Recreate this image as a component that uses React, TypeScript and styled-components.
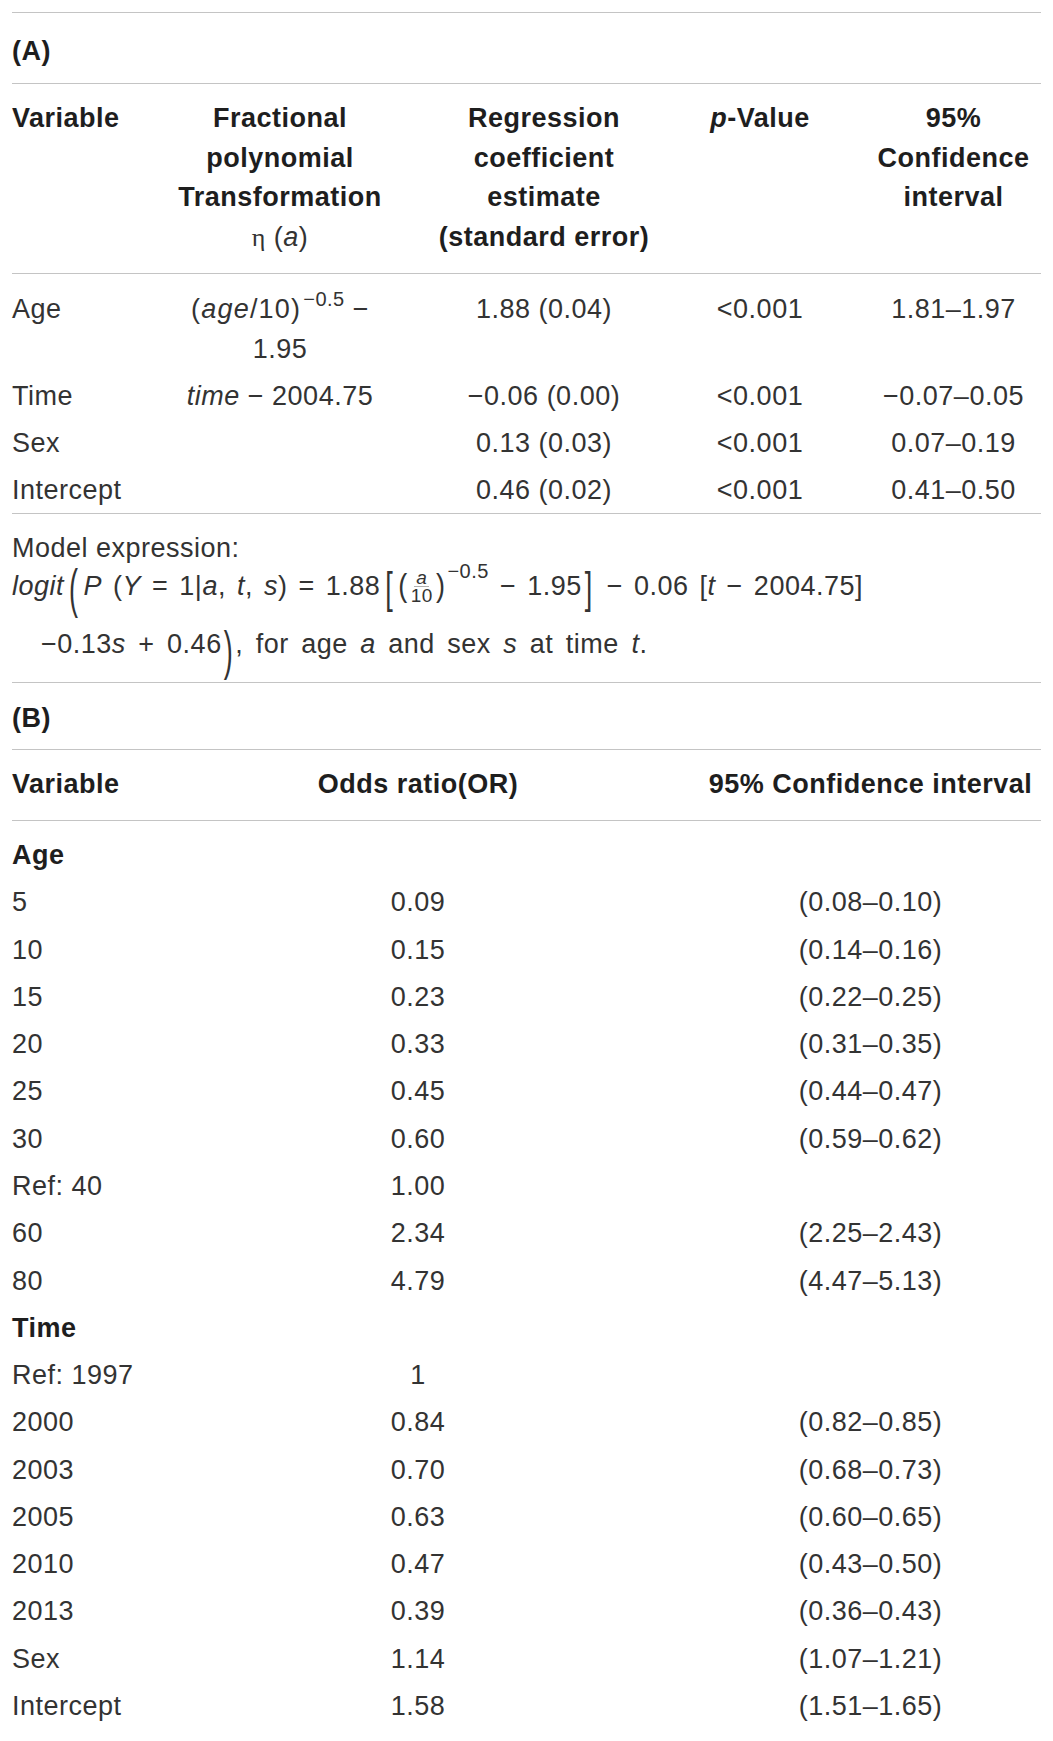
import React from 'react';
import styled, { createGlobalStyle } from 'styled-components';

const GlobalStyle = createGlobalStyle`
  html, body {
    margin: 0;
    padding: 0;
    background: #ffffff;
  }
  body {
    font-family: 'Liberation Sans', Arial, Helvetica, sans-serif;
    color: #333333;
  }
`;

const Sheet = styled.div`
  width: 1029px;
  padding: 12px 12px 10px;
  font-size: 27px;
  letter-spacing: 0.5px;
`;

const Block = styled.div<{ $pt: number; $pb: number }>`
  border-top: 1px solid #c4c4c4;
  padding: ${p => p.$pt}px 0 ${p => p.$pb}px;
`;

const Caption = styled.div`
  font-weight: 700;
  color: #1e1e1e;
  line-height: 40px;
`;

const Row = styled.div<{ $cols: string; $lh?: number; $pad?: number }>`
  display: grid;
  grid-template-columns: ${p => p.$cols};
  align-items: start;
  line-height: ${p => p.$lh ?? 40}px;
  padding: ${p => p.$pad ?? 0}px 0;
`;

const Cell = styled.div<{ $center?: boolean; $bold?: boolean }>`
  text-align: ${p => (p.$center ? 'center' : 'left')};
  font-weight: ${p => (p.$bold ? 700 : 400)};
  color: ${p => (p.$bold ? '#1e1e1e' : '#333333')};
  white-space: nowrap;
`;

const I = styled.i`
  font-style: italic;
`;

const Eta = styled.span`
  font-family: 'Liberation Serif', 'Times New Roman', serif;
  font-weight: 400;
  font-size: 26px;
`;

const Light = styled.span`
  font-weight: 400;
  color: #333333;
`;

const Expr = styled.span`
  letter-spacing: 1.2px;
`;

const InlineSup = styled.sup`
  font-size: 20px;
  line-height: 0;
  vertical-align: 12px;
  margin-left: 2px;
`;

const FormulaLine = styled.div<{ $h: number; $indent?: number; $ws?: number }>`
  display: flex;
  align-items: center;
  height: ${p => p.$h}px;
  padding-left: ${p => p.$indent ?? 0}px;
  white-space: pre;
  word-spacing: ${p => p.$ws ?? 0}px;
`;

const Big = styled.span<{ $scale: number; $gap?: number; $shift?: number }>`
  display: inline-block;
  transform: translateY(${p => p.$shift ?? 0}px) scaleY(${p => p.$scale});
  margin: 0 ${p => p.$gap ?? 3}px;
`;

const Frac = styled.span`
  display: inline-flex;
  flex-direction: column;
  align-items: center;
  font-size: 19px;
  line-height: 17px;
  margin: 0 3px;
`;

const Num = styled.span`
  font-style: italic;
  padding: 0 2px;
  border-bottom: 1px solid #b0b0b0;
`;

const Sup = styled.span`
  font-size: 20px;
  margin-bottom: 30px;
  margin-left: 2px;
`;

const colsA = '114px 308px 220px 212px 175px';
const colsB = '124px 564px 341px';

const rowsA: [string, React.ReactNode, string, string, string][] = [
  [
    'Age',
    <>
      <Expr>
        (<I>age</I>/10)
      </Expr>
      <InlineSup>−0.5</InlineSup> −<br />
      1.95
    </>,
    '1.88 (0.04)',
    '<0.001',
    '1.81–1.97',
  ],
  ['Time', <><I>time</I> − 2004.75</>, '−0.06 (0.00)', '<0.001', '−0.07–0.05'],
  ['Sex', '', '0.13 (0.03)', '<0.001', '0.07–0.19'],
  ['Intercept', '', '0.46 (0.02)', '<0.001', '0.41–0.50'],
];

type RowB = { label: string; or?: string; ci?: string; group?: boolean };

const rowsB: RowB[] = [
  { label: 'Age', group: true },
  { label: '5', or: '0.09', ci: '(0.08–0.10)' },
  { label: '10', or: '0.15', ci: '(0.14–0.16)' },
  { label: '15', or: '0.23', ci: '(0.22–0.25)' },
  { label: '20', or: '0.33', ci: '(0.31–0.35)' },
  { label: '25', or: '0.45', ci: '(0.44–0.47)' },
  { label: '30', or: '0.60', ci: '(0.59–0.62)' },
  { label: 'Ref: 40', or: '1.00' },
  { label: '60', or: '2.34', ci: '(2.25–2.43)' },
  { label: '80', or: '4.79', ci: '(4.47–5.13)' },
  { label: 'Time', group: true },
  { label: 'Ref: 1997', or: '1' },
  { label: '2000', or: '0.84', ci: '(0.82–0.85)' },
  { label: '2003', or: '0.70', ci: '(0.68–0.73)' },
  { label: '2005', or: '0.63', ci: '(0.60–0.65)' },
  { label: '2010', or: '0.47', ci: '(0.43–0.50)' },
  { label: '2013', or: '0.39', ci: '(0.36–0.43)' },
  { label: 'Sex', or: '1.14', ci: '(1.07–1.21)' },
  { label: 'Intercept', or: '1.58', ci: '(1.51–1.65)' },
];

function ModelExpression() {
  return (
    <Block $pt={16} $pb={0}>
      <FormulaLine $h={36}>Model expression:</FormulaLine>
      <FormulaLine $h={40} $ws={3}>
        <I>logit</I>
        <Big $scale={2} $gap={5} $shift={3}>(</Big>
        <I>P</I>
        {' ('}
        <I>Y</I>
        {' = 1|'}
        <I>a</I>
        {', '}
        <I>t</I>
        {', '}
        <I>s</I>
        {') = 1.88'}
        <Big $scale={1.65} $gap={5} $shift={2}>[</Big>
        <Big $scale={1.15} $gap={0}>(</Big>
        <Frac>
          <Num>a</Num>
          <span>10</span>
        </Frac>
        <Big $scale={1.15} $gap={0}>)</Big>
        <Sup>−0.5</Sup>
        {' − 1.95'}
        <Big $scale={1.65} $gap={3} $shift={2}>]</Big>
        {' − 0.06 ['}
        <I>t</I>
        {' − 2004.75]'}
      </FormulaLine>
      <FormulaLine $h={76} $indent={29} $ws={4.5}>
        {'−0.13'}
        <I>s</I>
        {' + 0.46'}
        <Big $scale={2} $gap={2} $shift={7}>)</Big>
        {', for age '}
        <I>a</I>
        {' and sex '}
        <I>s</I>
        {' at time '}
        <I>t</I>
        {'.'}
      </FormulaLine>
    </Block>
  );
}

export default function App() {
  return (
    <>
      <GlobalStyle />
      <Sheet>
        <Block $pt={18} $pb={12}>
          <Caption>(A)</Caption>
        </Block>
        <Block $pt={15} $pb={16}>
          <Row $cols={colsA} $lh={39.5}>
            <Cell $bold>Variable</Cell>
            <Cell $bold $center>
              Fractional
              <br />
              polynomial
              <br />
              Transformation
              <br />
              <Light>
                <Eta>η</Eta> (<I>a</I>)
              </Light>
            </Cell>
            <Cell $bold $center>
              Regression
              <br />
              coefficient
              <br />
              estimate
              <br />
              (standard error)
            </Cell>
            <Cell $bold $center>
              <I>p</I>-Value
            </Cell>
            <Cell $bold $center>
              95%
              <br />
              Confidence
              <br />
              interval
            </Cell>
          </Row>
        </Block>
        <Block $pt={11} $pb={0}>
          {rowsA.map(([v, t, c, p, ci]) => (
            <Row key={v} $cols={colsA} $pad={3.5}>
              <Cell>{v}</Cell>
              <Cell $center>{t}</Cell>
              <Cell $center>{c}</Cell>
              <Cell $center>{p}</Cell>
              <Cell $center>{ci}</Cell>
            </Row>
          ))}
        </Block>
        <ModelExpression />
        <Block $pt={15} $pb={11}>
          <Caption>(B)</Caption>
        </Block>
        <Block $pt={14} $pb={16}>
          <Row $cols={colsB}>
            <Cell $bold>Variable</Cell>
            <Cell $bold $center>Odds ratio(OR)</Cell>
            <Cell $bold $center>95% Confidence interval</Cell>
          </Row>
        </Block>
        <Block $pt={10.35} $pb={0}>
          {rowsB.map(r => (
            <Row key={r.label} $cols={colsB} $pad={3.65}>
              <Cell $bold={r.group}>{r.label}</Cell>
              <Cell $center>{r.or ?? ''}</Cell>
              <Cell $center>{r.ci ?? ''}</Cell>
            </Row>
          ))}
        </Block>
      </Sheet>
    </>
  );
}
